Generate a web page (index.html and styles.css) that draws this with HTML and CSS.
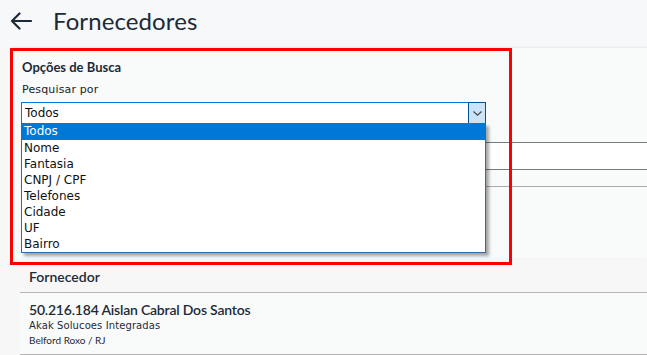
FILE: index.html
```html
<!DOCTYPE html>
<html lang="pt">
<head>
<meta charset="utf-8">
<link rel="stylesheet" href="styles.css">
</head>
<body>
<div class="page">
  <header class="topbar">
    <svg class="back" width="22" height="18" viewBox="0 0 22 18"><path d="M21 9H2M9.5 1.5 2 9l7.5 7.5" fill="none" stroke="#1d2a38" stroke-width="2.2" stroke-linecap="round" stroke-linejoin="round"/></svg>
    <h1 class="title">Fornecedores</h1>
  </header>

  <section class="card">
    <div class="card-title">Opções de Busca</div>
    <div class="label">Pesquisar por</div>
    <div class="select">
      <span class="select-value">Todos</span>
      <span class="select-btn"><svg width="9" height="5" viewBox="0 0 9 5"><path d="M0.5 0.5 4.5 4.2 8.5 0.5" fill="none" stroke="#444" stroke-width="1.1"/></svg></span>
    </div>
    <div class="input-row"></div>
    <div class="divider"></div>

    <ul class="dropdown">
      <li class="opt selected">Todos</li>
      <li class="opt">Nome</li>
      <li class="opt">Fantasia</li>
      <li class="opt">CNPJ / CPF</li>
      <li class="opt">Telefones</li>
      <li class="opt">Cidade</li>
      <li class="opt">UF</li>
      <li class="opt">Bairro</li>
    </ul>
  </section>

  <section class="results">
    <div class="results-head">Fornecedor</div>
    <div class="results-row">
      <div class="row-name">50.216.184 Aislan Cabral Dos Santos</div>
      <div class="row-sub">Akak Solucoes Integradas</div>
      <div class="row-city">Belford Roxo / RJ</div>
    </div>
  </section>

  <div class="highlight"></div>
</div>
</body>
</html>
```

FILE: styles.css
```css
* { box-sizing: border-box; }
html, body { margin: 0; padding: 0; }
body {
  background: #f7f7f7;
  font-family: "Lato", "DejaVu Sans", sans-serif;
  color: #1d2a38;
  overflow: hidden;
}
.page {
  position: relative;
  width: 647px;
  height: 355px;
  overflow: hidden;
}
.topbar {
  height: 48px;
  display: flex;
  align-items: center;
  padding-left: 10px;
  gap: 21px;
  background: #f7f8f9;
}
.back { margin-top: -6px; }
.title {
  margin: -8px 0 0 0;
  font-size: 24px;
  font-weight: 400;
  color: #1d2a38;
  letter-spacing: 0.1px;
}
.card {
  position: relative;
  margin-left: 12px;
  height: 210px;
  background: #f9fbfb;
  box-shadow: 0 -1px 2px rgba(0,0,0,0.07);
  padding: 11px 0 0 9px;
}
.card-title {
  font-family: "Lato", sans-serif;
  font-size: 13px;
  font-weight: 700;
  color: #1d2a38;
  line-height: 16px;
  margin-left: 1px;
}
.label {
  font-family: "DejaVu Sans", sans-serif;
  font-size: 11px;
  color: #222;
  line-height: 14px;
  margin-top: 8px;
  margin-left: 1px;
  letter-spacing: 0.15px;
}
.select {
  margin-top: 5px;
  width: 465px;
  height: 22px;
  border: 1px solid #0078d7;
  background: #fff;
  display: flex;
  align-items: center;
  justify-content: space-between;
}
.select-value {
  font-family: "DejaVu Sans", sans-serif;
  font-size: 12px;
  color: #111;
  padding-left: 3px;
}
.select-btn {
  width: 18px;
  height: 22px;
  margin: -1px -1px -1px 0;
  background: #cce4f7;
  border: 1px solid #005499;
  display: flex;
  align-items: center;
  justify-content: center;
}
.input-row {
  margin-top: 18px;
  height: 28px;
  border-top: 1px solid #7a7a7a;
  border-bottom: 1px solid #7a7a7a;
  background: #fff;
}
.divider {
  margin-top: 16px;
  border-top: 1px solid #ababab;
}
.dropdown {
  position: absolute;
  left: 9px;
  top: 75px;
  width: 465px;
  margin: 0;
  padding: 0;
  list-style: none;
  background: #fff;
  border: 1px solid #2b6db3;
  border-top: none;
  box-shadow: 3px 3px 3px rgba(0,0,0,0.35);
}
.opt {
  height: 16px;
  line-height: 16px;
  font-family: "DejaVu Sans", sans-serif;
  font-size: 12px;
  color: #111;
  padding-left: 2px;
}
.opt.selected {
  background: #0078d7;
  color: #fff;
  height: 17px;
  line-height: 17px;
  margin: 0 -1px;
  padding-left: 3px;
}
.results {
  margin-left: 20px;
  margin-top: 4px;
}
.results-head {
  height: 31px;
  border-bottom: 1px solid #b5b5b5;
  background: #f7f7f7;
  font-family: "Lato", sans-serif;
  font-size: 14px;
  font-weight: 600;
  color: #1d2a38;
  padding: 6px 0 0 9px;
}
.results-row {
  height: 62px;
  background: #f9fbfb;
  border-bottom: 1px solid #b5b5b5;
  padding: 8px 0 0 9px;
}
.row-name {
  font-family: "Lato", sans-serif;
  font-size: 14px;
  font-weight: 600;
  color: #1d2a38;
  line-height: 18px;
  letter-spacing: -0.2px;
}
.row-sub {
  font-family: "DejaVu Sans", sans-serif;
  font-size: 10px;
  color: #1d2a38;
  line-height: 13px;
  letter-spacing: 0.1px;
}
.row-city {
  font-family: "Lato", sans-serif;
  font-size: 10px;
  color: #1d2a38;
  line-height: 14px;
  margin-top: 1px;
}
.highlight {
  position: absolute;
  left: 10px;
  top: 48px;
  width: 502px;
  height: 217px;
  border: 3px solid #ff0000;
  pointer-events: none;
}
```
